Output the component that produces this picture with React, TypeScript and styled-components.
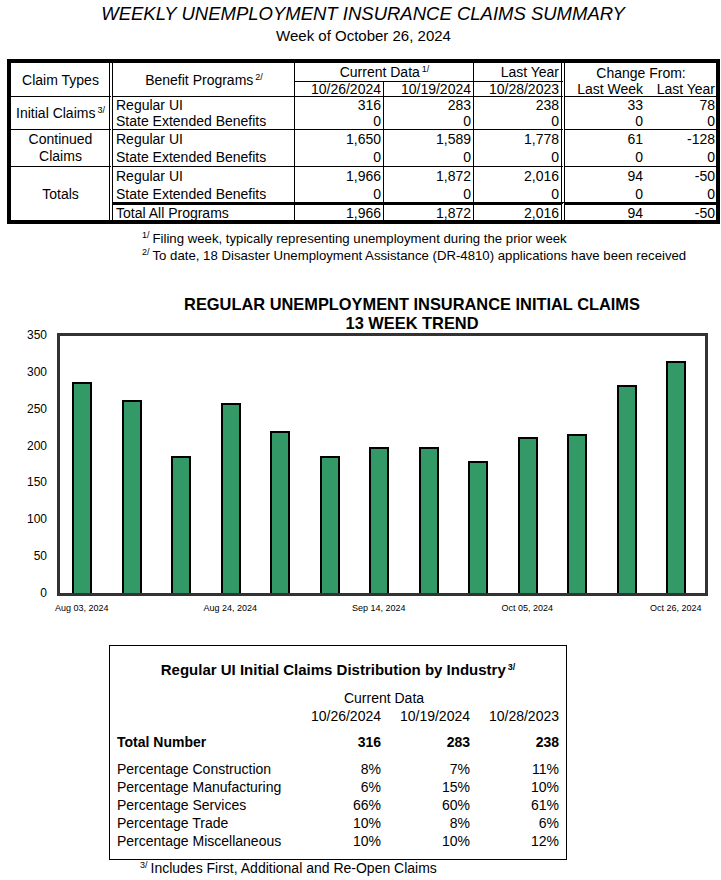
import styled, { createGlobalStyle } from 'styled-components'

const GlobalStyle = createGlobalStyle`
  body {
    margin: 0;
    background: #fff;
    color: #000;
    font-family: "Liberation Sans", Arial, sans-serif;
  }
`

type Edge = 'none' | 'thin' | 'double' | 'thick'
type Align = 'left' | 'center' | 'right'

const edge = (e?: Edge) =>
  e === 'thin' ? '1px solid #000'
    : e === 'double' ? '4px double #000'
    : e === 'thick' ? '3px solid #000'
    : 'none'

const Page = styled.div`
  width: 721px;
  padding-top: 3px;
`

const Title = styled.h1`
  margin: 0;
  padding-left: 5px;
  font-size: 18.5px;
  font-style: italic;
  font-weight: normal;
  line-height: 22px;
  text-align: center;
`

const SubTitle = styled.div`
  margin-top: 2px;
  padding-left: 6px;
  font-size: 15px;
  line-height: 18px;
  text-align: center;
`

const Sup = styled.sup`
  font-size: 9px;
  line-height: 0;
  vertical-align: 5px;
  margin-left: 2px;
`

// the weekly summary grid
const SummaryTable = styled.table`
  margin: 14px 0 0 7px;
  width: 713px;
  border: 4px solid #000;
  border-spacing: 0;
  table-layout: fixed;
  font-size: 14px;
`

const Row = styled.tr<{ $h: number }>`
  height: ${p => p.$h}px;
`

const Cell = styled.td<{ $align?: Align; $r?: Edge; $b?: Edge; $t?: Edge }>`
  padding: 0 2px 0 3px;
  line-height: 14px;
  text-align: ${p => p.$align ?? 'right'};
  border-right: ${p => edge(p.$r)};
  border-bottom: ${p => edge(p.$b)};
  border-top: ${p => edge(p.$t)};
  white-space: nowrap;
  vertical-align: middle;
  overflow: hidden;
`

const Notes = styled.div`
  margin: 6px 0 0 142px;
  font-size: 13.2px;
  line-height: 17px;
`

const NoteSup = styled.sup`
  font-size: 9px;
  line-height: 0;
  vertical-align: 5px;
  margin-right: 3px;
`

// bar chart
const ChartTitle = styled.div`
  margin-top: 31px;
  padding-left: 103px;
  font-size: 16.4px;
  font-weight: bold;
  line-height: 19px;
  text-align: center;
`

const ChartRow = styled.div`
  display: flex;
  align-items: flex-start;
`

const YAxis = styled.div`
  width: 57px;
  height: 272px;
  margin-top: -5px;
  padding-right: 10px;
  box-sizing: border-box;
  display: flex;
  flex-direction: column;
  justify-content: space-between;
  align-items: flex-end;
  font-size: 12px;
`

const YTick = styled.div`
  height: 14px;
  line-height: 14px;
`

const Plot = styled.div`
  width: 651px;
  height: 263px;
  box-sizing: border-box;
  border: 3px solid #333;
  padding-left: 12px;
  display: flex;
  align-items: flex-end;
  gap: 29.5px;
`

const Bar = styled.div`
  width: 20px;
  box-sizing: border-box;
  border: 2px solid #000;
  border-bottom: none;
  background: #339966;
`

const XAxis = styled.div`
  margin-top: 2px;
  padding-left: 57px;
  display: grid;
  grid-template-columns: repeat(13, 49.5px);
  font-size: 9px;
  line-height: 12px;
`

const XTick = styled.div`
  display: flex;
  justify-content: center;
  white-space: nowrap;
`

// industry box
const IndustryBox = styled.div`
  margin: 31px 0 0 109px;
  width: 458px;
  box-sizing: border-box;
  border: 1px solid #000;
  padding: 15px 7px 9px 7px;
  font-size: 14px;
`

const BoxTitle = styled.div`
  font-size: 15px;
  font-weight: bold;
  line-height: 18px;
  text-align: center;
`

const Grid = styled.div<{ $mt: number; $bold?: boolean }>`
  margin-top: ${p => p.$mt}px;
  display: grid;
  grid-template-columns: 175px repeat(3, 89px);
  line-height: 18px;
  font-weight: ${p => (p.$bold ? 'bold' : 'normal')};
`

const G = styled.div<{ $align?: Align; $span?: number }>`
  text-align: ${p => p.$align ?? 'right'};
  grid-column: ${p => (p.$span ? `span ${p.$span}` : 'auto')};
  white-space: nowrap;
`

const CenterNote = styled.div`
  margin-left: 140px;
  font-size: 14px;
  line-height: 16px;
`

const trend = [
  { label: 'Aug 03, 2024', value: 288 },
  { label: '', value: 263 },
  { label: '', value: 187 },
  { label: 'Aug 24, 2024', value: 259 },
  { label: '', value: 220 },
  { label: '', value: 186 },
  { label: 'Sep 14, 2024', value: 199 },
  { label: '', value: 199 },
  { label: '', value: 180 },
  { label: 'Oct 05, 2024', value: 213 },
  { label: '', value: 216 },
  { label: '', value: 283 },
  { label: 'Oct 26, 2024', value: 316 },
]

const industry = [
  ['Percentage Construction', '8%', '7%', '11%'],
  ['Percentage Manufacturing', '6%', '15%', '10%'],
  ['Percentage Services', '66%', '60%', '61%'],
  ['Percentage Trade', '10%', '8%', '6%'],
  ['Percentage Miscellaneous', '10%', '10%', '12%'],
]

const plotHeight = 257
const maxY = 350

const ValueCells = ({ v, b }: { v: string[]; b?: Edge }) => (
  <>
    <Cell $r="thin" $b={b}>{v[0]}</Cell>
    <Cell $r="thin" $b={b}>{v[1]}</Cell>
    <Cell $r="double" $b={b}>{v[2]}</Cell>
    <Cell $b={b} style={{ paddingRight: 3 }}>{v[3]}</Cell>
    <Cell $b={b} style={{ paddingRight: 1 }}>{v[4]}</Cell>
  </>
)

export default function App() {
  return (
    <Page>
      <GlobalStyle />
      <Title>WEEKLY UNEMPLOYMENT INSURANCE CLAIMS SUMMARY</Title>
      <SubTitle>Week of October 26, 2024</SubTitle>

      <SummaryTable>
        <colgroup>
          <col style={{ width: 102 }} />
          <col style={{ width: 182 }} />
          <col style={{ width: 89 }} />
          <col style={{ width: 90 }} />
          <col style={{ width: 91 }} />
          <col style={{ width: 81 }} />
          <col style={{ width: 70 }} />
        </colgroup>
        <tbody>
          <Row $h={19}>
            <Cell rowSpan={2} $align="center" $r="double" $b="thin">Claim Types</Cell>
            <Cell rowSpan={2} $align="center" $r="thin" $b="thin">Benefit Programs<Sup>2/</Sup></Cell>
            <Cell colSpan={2} $align="center" $r="thin" $b="thin">Current Data<Sup>1/</Sup></Cell>
            <Cell $r="double" $b="thin">Last Year</Cell>
            <Cell colSpan={2} $align="center">Change From:</Cell>
          </Row>
          <Row $h={15}>
            <Cell $r="thin" $b="thin">10/26/2024</Cell>
            <Cell $r="thin" $b="thin">10/19/2024</Cell>
            <Cell $r="double" $b="thin">10/28/2023</Cell>
            <Cell $b="thin" style={{ paddingRight: 3 }}>Last Week</Cell>
            <Cell $b="thin" style={{ paddingRight: 1 }}>Last Year</Cell>
          </Row>

          <Row $h={16}>
            <Cell rowSpan={2} $align="center" $r="double" $b="thin">Initial Claims<Sup>3/</Sup></Cell>
            <Cell $align="left" $r="thin">Regular UI</Cell>
            <ValueCells v={['316', '283', '238', '33', '78']} />
          </Row>
          <Row $h={17}>
            <Cell $align="left" $r="thin" $b="thin">State Extended Benefits</Cell>
            <ValueCells v={['0', '0', '0', '0', '0']} b="thin" />
          </Row>

          <Row $h={18}>
            <Cell rowSpan={2} $align="center" $r="double" $b="thin" style={{ lineHeight: '17px', whiteSpace: 'normal' }}>
              Continued<br />Claims
            </Cell>
            <Cell $align="left" $r="thin">Regular UI</Cell>
            <ValueCells v={['1,650', '1,589', '1,778', '61', '-128']} />
          </Row>
          <Row $h={19}>
            <Cell $align="left" $r="thin" $b="thin">State Extended Benefits</Cell>
            <ValueCells v={['0', '0', '0', '0', '0']} b="thin" />
          </Row>

          <Row $h={18}>
            <Cell rowSpan={3} $align="center" $r="double">Totals</Cell>
            <Cell $align="left" $r="thin">Regular UI</Cell>
            <ValueCells v={['1,966', '1,872', '2,016', '94', '-50']} />
          </Row>
          <Row $h={17}>
            <Cell $align="left" $r="thin">State Extended Benefits</Cell>
            <ValueCells v={['0', '0', '0', '0', '0']} />
          </Row>
          <Row $h={18}>
            <Cell $align="left" $r="thin" $t="thick">Total All Programs</Cell>
            <Cell $r="thin" $t="thick">1,966</Cell>
            <Cell $r="thin" $t="thick">1,872</Cell>
            <Cell $r="double" $t="thick">2,016</Cell>
            <Cell $t="thick" style={{ paddingRight: 3 }}>94</Cell>
            <Cell $t="thick" style={{ paddingRight: 1 }}>-50</Cell>
          </Row>
        </tbody>
      </SummaryTable>

      <Notes>
        <div><NoteSup>1/</NoteSup>Filing week, typically representing unemployment during the prior week</div>
        <div><NoteSup>2/</NoteSup>To date, 18 Disaster Unemployment Assistance (DR-4810) applications have been received</div>
      </Notes>

      <ChartTitle>
        REGULAR UNEMPLOYMENT INSURANCE INITIAL CLAIMS
        <br />
        13 WEEK TREND
      </ChartTitle>
      <ChartRow>
        <YAxis>
          {[350, 300, 250, 200, 150, 100, 50, 0].map(t => (
            <YTick key={t}>{t}</YTick>
          ))}
        </YAxis>
        <Plot>
          {trend.map((w, i) => (
            <Bar key={i} style={{ height: Math.round((w.value / maxY) * plotHeight) }} />
          ))}
        </Plot>
      </ChartRow>
      <XAxis>
        {trend.map((w, i) => (
          <XTick key={i}>{w.label}</XTick>
        ))}
      </XAxis>

      <IndustryBox>
        <BoxTitle>Regular UI Initial Claims Distribution by Industry<Sup>3/</Sup></BoxTitle>
        <Grid $mt={10}>
          <G />
          <G $span={2} $align="center" style={{ paddingLeft: 6 }}>Current Data</G>
          <G />
          <G />
          <G>10/26/2024</G>
          <G>10/19/2024</G>
          <G>10/28/2023</G>
        </Grid>
        <Grid $mt={8} $bold>
          <G $align="left">Total Number</G>
          <G>316</G>
          <G>283</G>
          <G>238</G>
        </Grid>
        <Grid $mt={9}>
          {industry.map(r => (
            <>
              <G $align="left" key={r[0]}>{r[0]}</G>
              <G>{r[1]}</G>
              <G>{r[2]}</G>
              <G>{r[3]}</G>
            </>
          ))}
        </Grid>
      </IndustryBox>
      <CenterNote><NoteSup>3/</NoteSup>Includes First, Additional and Re-Open Claims</CenterNote>
    </Page>
  )
}
